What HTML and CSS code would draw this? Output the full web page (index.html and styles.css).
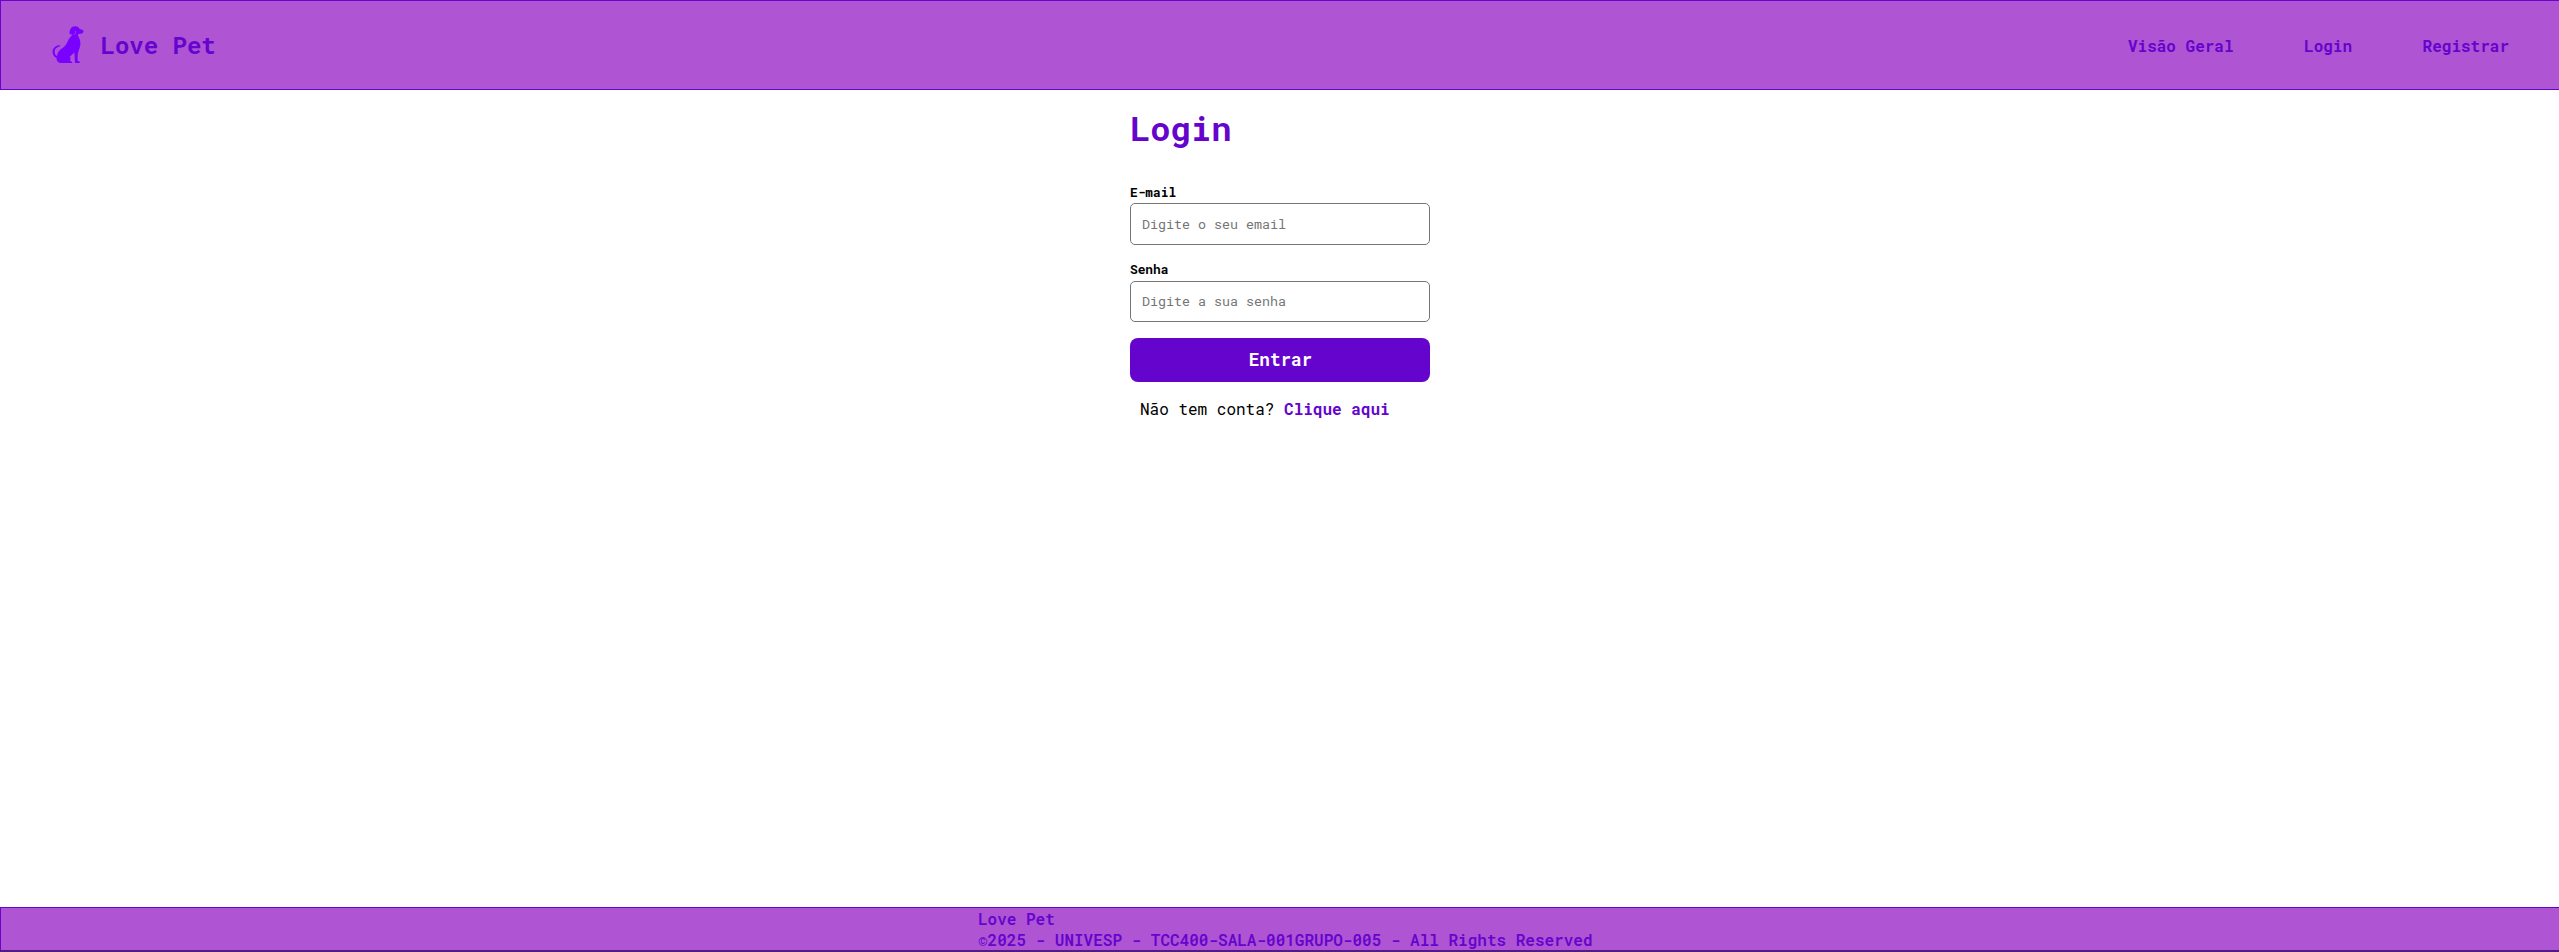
FILE: index.html
```html
<!DOCTYPE html>
<html lang="pt-BR">
<head>
<meta charset="utf-8">
<title>Love Pet</title>
<link rel="stylesheet" href="styles.css">
</head>
<body>
<header class="header">
  <a class="brand">
    <svg class="dog" viewBox="0 0 96 114" aria-hidden="true">
      <path d="M54 12C57 4 63 1 70 1C77 1 80 4 83 9L94 13Q96 19 91 22C86 25 82 23 78 25C77 31 82 35 84 43C87 53 84 63 81 71C78 78 77 86 77 94L77 104Q84 105 84 111L69 111L67 79C62 85 57 89 53 93C58 98 56 102 53 104Q61 105 61 111L24 111C15 108 13 101 14 97C4 92 0 82 2 73C5 64 13 57 23 58Q28 61 21 62C12 64 8 69 8 77C8 83 11 88 15 90C16 78 23 71 33 65C43 58 45 50 49 42C53 33 60 32 60 25C53 27 50 22 54 12Z"/>
      <path class="dog-line" d="M70 14Q72 26 65 25"/>
    </svg>
    <span class="brand-name">Love Pet</span>
  </a>
  <nav class="nav"><a>Visão Geral</a><a>Login</a><a>Registrar</a></nav>
</header>
<main class="main">
  <form class="form">
    <h1 class="title">Login</h1>
    <label class="label" for="email">E-mail</label>
    <input class="input input-email" id="email" type="email" placeholder="Digite o seu email">
    <label class="label label-password" for="senha">Senha</label>
    <input class="input input-password" id="senha" type="password" placeholder="Digite a sua senha">
    <button class="button" type="button">Entrar</button>
    <p class="signup">Não tem conta? <a class="signup-link">Clique aqui</a></p>
  </form>
</main>
<footer class="footer">
  <div class="credits"><p>Love Pet</p><p><span class="copy">©</span>2025 - UNIVESP - TCC400-SALA-001GRUPO-005 - All Rights Reserved</p></div>
</footer>
</body>
</html>
```
FILE: styles.css
```css
* { box-sizing: border-box; margin: 0; padding: 0; }
html { overflow: hidden; }
body {
  width: 2560px;
  height: 952px;
  display: flex;
  flex-direction: column;
  overflow: hidden;
  background: #fff;
  font: 16px/21px "Roboto Mono", "DejaVu Sans Mono", monospace;
  border-bottom: 1px solid #3a3340;
}
.header {
  height: 90px;
  flex: none;
  display: flex;
  align-items: center;
  justify-content: space-between;
  padding: 0 50px 0 51px;
  border: 1px solid #6404cd;
  background: #af54d3;
  color: #6404cd;
}
.brand { display: flex; align-items: center; gap: 16.5px; }
.dog { width: 32px; height: 38px; fill: #7a00ff; }
.dog-line { fill: none; stroke: #af54d3; stroke-width: 2; }
.brand-name { font-size: 24px; line-height: 32px; font-weight: 700; }
.nav { display: flex; gap: 70.5px; font-weight: 700; }
.main { flex: 1; display: flex; justify-content: center; }
.form { width: 300px; display: flex; flex-direction: column; }
.title {
  margin-top: 16px;
  height: 77px;
  font-size: 33.8px;
  line-height: 44px;
  font-weight: 700;
  color: #6404cd;
}
.label { height: 20px; line-height: 18px; font-size: 12.8px; font-weight: 700; }
.label-password { line-height: 16px; }
.input {
  height: 41px;
  padding: 0 11px;
  border: 1px solid #767676;
  border-radius: 5px;
  background: #fff;
  font: 13.333px "Roboto Mono", "DejaVu Sans Mono", monospace;
}
.input-email { height: 42px; margin-bottom: 16px; }
.input-password { padding-bottom: 1px; }
.input::placeholder { color: #757575; }
.button {
  height: 44px;
  margin-top: 16px;
  padding: 0 0 2px 1px;
  border: 0;
  border-radius: 8px;
  background: #6404cd;
  color: #fff;
  font: 700 17.6px "Roboto Mono", "DejaVu Sans Mono", monospace;
}
.signup { margin-top: 16px; padding-left: 10px; white-space: nowrap; }
.signup-link { color: #6404cd; font-weight: 700; }
.footer {
  height: 44px;
  flex: none;
  display: flex;
  justify-content: center;
  border: 1px solid #6404cd;
  background: #af54d3;
  color: #6404cd;
}
.credits { width: 604px; white-space: nowrap; font-weight: 600; }
.copy { display: inline-block; width: 9.6px; font-weight: 400; }
```
